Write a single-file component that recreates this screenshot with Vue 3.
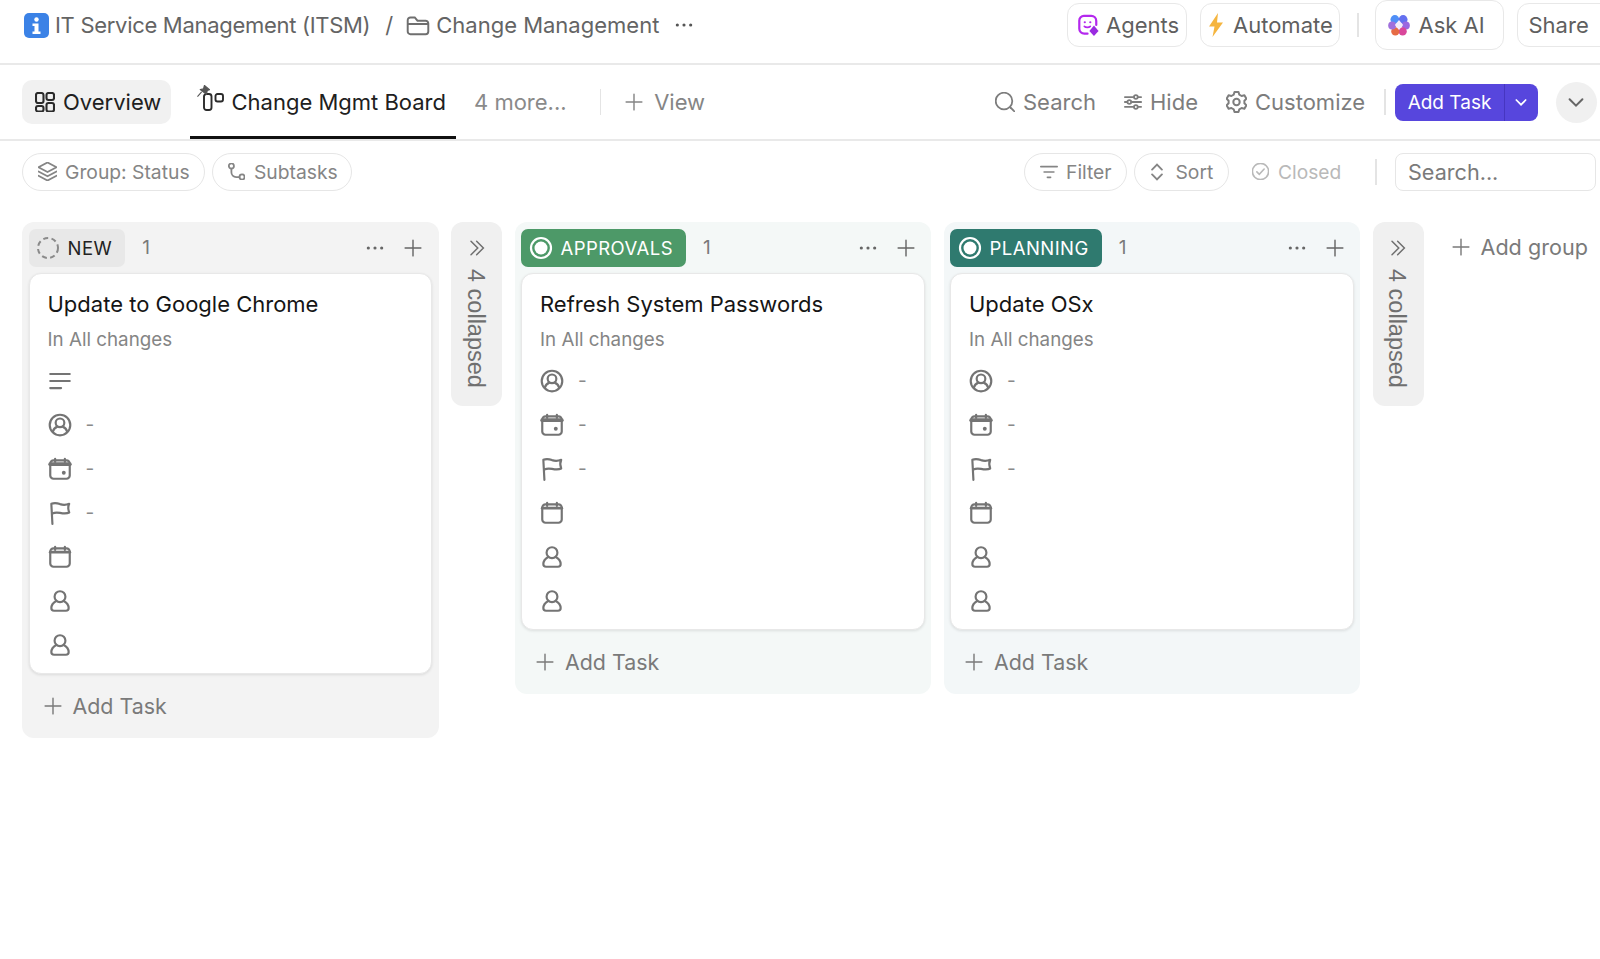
<script setup>
const columns = [
  {
    id: 'new', label: 'NEW', tone: 'tone-new', status: 'dashed', title: 'Update to Google Chrome',
    rows: [
      { icon: 'lines' }, { icon: 'usercircle', dash: true }, { icon: 'caldue', dash: true }, { icon: 'flag', dash: true },
      { icon: 'cal' }, { icon: 'user' }, { icon: 'user' }
    ]
  },
  {
    id: 'approvals', label: 'APPROVALS', tone: 'tone-approvals', status: 'ring', title: 'Refresh System Passwords',
    rows: [
      { icon: 'usercircle', dash: true }, { icon: 'caldue', dash: true }, { icon: 'flag', dash: true },
      { icon: 'cal' }, { icon: 'user' }, { icon: 'user' }
    ]
  },
  {
    id: 'planning', label: 'PLANNING', tone: 'tone-planning', status: 'ring', title: 'Update OSx',
    rows: [
      { icon: 'usercircle', dash: true }, { icon: 'caldue', dash: true }, { icon: 'flag', dash: true },
      { icon: 'cal' }, { icon: 'user' }, { icon: 'user' }
    ]
  }
]
</script>

<template>
  <svg class="defs" xmlns="http://www.w3.org/2000/svg">
    <symbol id="i-plus" viewBox="0 0 24 24"><path d="M12 1.500v21M1.500 12h21" /></symbol>
    <symbol id="i-dots" viewBox="0 0 24 24"><circle cx="4" cy="12" r="1.900" class="solid" /><circle cx="12" cy="12" r="1.900" class="solid" /><circle cx="20" cy="12" r="1.900" class="solid" /></symbol>
    <symbol id="i-folder" viewBox="0 0 24 24"><path d="M2.500 7.500A2.500 2.500 0 0 1 5 5h4l2.500 3H19a2.500 2.500 0 0 1 2.500 2.500V18a2.500 2.500 0 0 1-2.500 2.500H5A2.500 2.500 0 0 1 2.500 18zM2.500 11h19" /></symbol>
    <symbol id="i-overview" viewBox="2 2 20 20.500"><rect x="3" y="3" width="7.500" height="10" rx="2" /><rect x="13.500" y="3" width="7.500" height="7" rx="2" /><rect x="3" y="16" width="7.500" height="5.500" rx="2" /><rect x="13.500" y="13" width="7.500" height="8.500" rx="2" /></symbol>
    <symbol id="i-board" viewBox="0 0 21 18"><rect x="1" y="1" width="7.500" height="16" rx="2.500" /><rect x="12.500" y="1" width="7.500" height="7.500" rx="2" /></symbol>
    <symbol id="i-search" viewBox="2 2 20 20"><circle cx="11" cy="11" r="8.300" /><path d="M17.500 17.500l4 4" /></symbol>
    <symbol id="i-sliders" viewBox="1 1 22 22"><path d="M2 6h11M18 6h4M2 12h3M10 12h12M2 18h11M18 18h4" /><circle cx="15.500" cy="6" r="2.300" /><circle cx="7.500" cy="12" r="2.300" /><circle cx="15.500" cy="18" r="2.300" /></symbol>
    <symbol id="i-gear" viewBox="1.500 2 21 22"><path d="M10 3h4l.8 2.700 2.300 1.300 2.800-.7 2 3.500-2 2v2.400l2 2-2 3.500-2.800-.7-2.300 1.300-.8 2.700h-4l-.8-2.700-2.300-1.300-2.800.7-2-3.500 2-2v-2.400l-2-2 2-3.500 2.800.7 2.300-1.300z" stroke-linejoin="round" /><circle cx="12" cy="13" r="3.200" /></symbol>
    <symbol id="i-chevron" viewBox="0 0 24 24"><path d="M5 9l7 7 7-7" /></symbol>
    <symbol id="i-layers" viewBox="2 2 20 20"><path d="M12 2.500l9.500 5-9.500 5-9.500-5zM2.500 12l9.500 5 9.500-5M2.500 16.500l9.500 5 9.500-5" stroke-linejoin="round" /></symbol>
    <symbol id="i-subtasks" viewBox="2 2 20 20"><circle cx="6" cy="5.500" r="3" /><circle cx="18.500" cy="18.500" r="3" /><path d="M6 8.500V13a5.500 5.500 0 0 0 5.500 5.500h4" /></symbol>
    <symbol id="i-filter" viewBox="1 1 22 22"><path d="M2 5.500h20M6 12h12M10 18.500h4" /></symbol>
    <symbol id="i-sort" viewBox="5 1 14 22"><path d="M6 9l6-6 6 6M6 15l6 6 6-6" /></symbol>
    <symbol id="i-check" viewBox="1.500 1.500 21 21"><circle cx="12" cy="12" r="10" /><path d="M7.500 12.500l3 3 6-6.500" /></symbol>
    <symbol id="i-double" viewBox="0 0 24 24"><path d="M4 3l9 9-9 9M11.500 3l9 9-9 9" /></symbol>
    <symbol id="i-lines" viewBox="0 0 24 24"><path d="M3 5.500h18M3 12h18M3 18.500h10" /></symbol>
    <symbol id="i-usercircle" viewBox="0 0 24 24"><circle cx="12" cy="12" r="9.500" /><circle cx="12" cy="10" r="4" /><path d="M9.500 13.500c-2 .8-3.500 2.300-4 4.500M14.500 13.500c2 .8 3.500 2.300 4 4.500" /></symbol>
    <symbol id="i-caldue" viewBox="0 0 24 24"><rect x="3" y="4" width="18" height="17" rx="3" /><path d="M3 7.500h18" stroke-width="3.600" /><path d="M7.500 2.500v3M16.500 2.500v3" /><circle cx="15.500" cy="15.500" r="1.800" class="solid" /></symbol>
    <symbol id="i-cal" viewBox="0 0 24 24"><rect x="3" y="4" width="18" height="17" rx="3" /><path d="M3 7.500h18" stroke-width="2.600" /><path d="M7.500 2.500v3M16.500 2.500v3" /></symbol>
    <symbol id="i-flag" viewBox="0 0 24 24"><path d="M5 22L4 3.500C7.500 2 10 3 12 3.800c3 1 6 .7 8.500-.3-1.400 3-1.400 4.500 0 8-2.500 1.500-5.500 1-8.500.4-2.800-.5-5-.5-7 .6" stroke-linejoin="round" /></symbol>
    <symbol id="i-user" viewBox="0 0 24 24"><circle cx="12" cy="8" r="5" /><path d="M8.500 12c-2.500 1.500-4.500 3.500-4.500 6.500C4 20 5 21 6.500 21h11c1.500 0 2.500-1 2.500-2.500 0-3-2-5-4.500-6.500" /></symbol>
  </svg>

  <div class="page">
    <header class="topbar">
      <svg class="logo" viewBox="0 0 25 25">
        <rect width="25" height="25" rx="5" fill="#3b82e6" />
        <circle cx="12.500" cy="6.500" r="2.200" fill="#fff" />
        <path d="M8.500 10.500h6v8h2v2.500h-8v-2.500h2v-5.500h-2z" fill="#fff" />
      </svg>
      <span class="crumb crumb-space">IT Service Management (ITSM)</span>
      <span class="slash">/</span>
      <svg class="ic folder"><use href="#i-folder" /></svg>
      <span class="crumb">Change Management</span>
      <svg class="ic topdots"><use href="#i-dots" /></svg>

      <div class="top-actions">
        <button class="top-btn agents">
          <svg class="brand" viewBox="0 0 24 24">
            <path d="M11.500 21.500H8A5.500 5.500 0 0 1 2.500 16V7A5 5 0 0 1 7.500 2h8A5.500 5.500 0 0 1 21 7.500V12" fill="none" stroke="#b428ee" stroke-width="2.400" stroke-linecap="round" />
            <circle cx="8.500" cy="9" r="1.200" fill="#b428ee" />
            <circle cx="14.500" cy="9" r="1.200" fill="#b428ee" />
            <path d="M8 13.500c1.500 1.500 5 1.500 6.500 0" fill="none" stroke="#b428ee" stroke-width="1.800" stroke-linecap="round" />
            <path d="M18.500 12.500l5 6-5 5.500-5-5.500z" fill="#9a2be0" />
          </svg>
          Agents
        </button>
        <button class="top-btn automate">
          <svg class="bolt" viewBox="0 0 16 24"><path d="M10 0L1 13.500h5.500L4.500 24 15 9.500H9z" fill="#f5b53f" /></svg>
          Automate
        </button>
        <span class="vline top-line"></span>
        <button class="top-btn askai">
          <svg class="brand flower" viewBox="0 0 24 24">
            <circle cx="7.500" cy="6" r="4.800" fill="#4f8ff7" />
            <circle cx="16.500" cy="6" r="4.800" fill="#6470f0" />
            <circle cx="19.500" cy="12.500" r="4.300" fill="#9a68e0" />
            <circle cx="16" cy="19" r="4.500" fill="#d9479b" />
            <circle cx="8" cy="19" r="4.500" fill="#e66b45" />
            <circle cx="4.500" cy="12.500" r="4.300" fill="#a070dc" />
            <path d="M12 6.500l4.500 5.500-4.500 5.500L7.500 12z" fill="#f3ecfb" />
          </svg>
          Ask AI
        </button>
        <button class="top-btn share">Share</button>
      </div>
    </header>

    <nav class="tabbar">
      <div class="tab tab-overview">
        <svg class="ic overview-ic dark"><use href="#i-overview" /></svg>
        Overview
      </div>
      <div class="tab tab-active">
        <svg class="pin" viewBox="0 0 14 14"><path d="M8 .5l5.500 4.500-2.500 1-.8 4L3.500 5 7 4.200zM5 7.500L.5 12.500" fill="#555" stroke="#555" stroke-width="1.200" stroke-linejoin="round" /></svg>
        <svg class="ic board-ic dark"><use href="#i-board" /></svg>
        Change Mgmt Board
      </div>
      <span class="more">4 more...</span>
      <span class="vline tab-line"></span>
      <div class="view-btn">
        <svg class="ic plus-ic"><use href="#i-plus" /></svg>
        View
      </div>

      <div class="tab-actions">
        <span class="tool"><svg class="ic search-ic"><use href="#i-search" /></svg>Search</span>
        <span class="tool"><svg class="ic sliders-ic"><use href="#i-sliders" /></svg>Hide</span>
        <span class="tool"><svg class="ic gear-ic"><use href="#i-gear" /></svg>Customize</span>
        <span class="vline tool-line"></span>
        <div class="add-task">
          <span class="add-main">Add Task</span>
          <span class="add-caret"><svg class="ic caret-ic"><use href="#i-chevron" /></svg></span>
        </div>
        <span class="round-btn"><svg class="ic round-ic"><use href="#i-chevron" /></svg></span>
      </div>
    </nav>

    <section class="filters">
      <span class="chip chip-group"><svg class="ic layers-ic"><use href="#i-layers" /></svg>Group: Status</span>
      <span class="chip chip-sub"><svg class="ic sub-ic"><use href="#i-subtasks" /></svg>Subtasks</span>
      <div class="filters-right">
        <span class="chip chip-filter"><svg class="ic filter-ic"><use href="#i-filter" /></svg>Filter</span>
        <span class="chip chip-sort"><svg class="ic sort-ic"><use href="#i-sort" /></svg>Sort</span>
        <span class="closed"><svg class="ic check-ic"><use href="#i-check" /></svg>Closed</span>
        <span class="vline filter-line"></span>
        <div class="search-box">Search...</div>
      </div>
    </section>

    <main class="board">
      <template v-for="col in columns" :key="col.id">
        <div class="column" :class="col.tone">
          <div class="col-head">
            <span class="status">
              <svg class="status-ic" viewBox="0 0 24 24">
                <circle v-if="col.status === 'dashed'" cx="12" cy="12" r="10" fill="none" stroke="#8a8a8a" stroke-width="2" stroke-dasharray="5 3.400" />
                <template v-else>
                  <circle cx="12" cy="12" r="10" fill="none" stroke="#fff" stroke-width="2.200" />
                  <circle cx="12" cy="12" r="6.500" fill="#fff" />
                </template>
              </svg>
              {{ col.label }}
            </span>
            <span class="count">1</span>
            <svg class="ic head-dots"><use href="#i-dots" /></svg>
            <svg class="ic head-plus"><use href="#i-plus" /></svg>
          </div>
          <article class="card">
            <h3 class="card-title">{{ col.title }}</h3>
            <p class="card-sub">In All changes</p>
            <div v-for="(row, i) in col.rows" :key="i" class="card-row">
              <svg class="ic row-ic"><use :href="'#i-' + row.icon" /></svg>
              <span v-if="row.dash" class="dash">-</span>
            </div>
          </article>
          <div class="add-row">
            <svg class="ic plus-ic"><use href="#i-plus" /></svg>
            Add Task
          </div>
        </div>
        <div v-if="col.id !== 'approvals'" class="collapsed">
          <svg class="ic double-ic"><use href="#i-double" /></svg>
          <span class="collapsed-text">4 collapsed</span>
        </div>
      </template>
      <div class="add-group">
        <svg class="ic plus-ic"><use href="#i-plus" /></svg>
        Add group
      </div>
    </main>
  </div>
</template>

<style scoped>
.defs {
  display: none;
}

.page {
  width: 1600px;
  height: 959px;
  overflow: hidden;
  background: #fff;
  font-family: Inter, "Liberation Sans", sans-serif;
  color: #6f6f6f;
}

.ic {
  fill: none;
  stroke: currentColor;
  stroke-width: 1.800;
  stroke-linecap: round;
  flex: none;
}

.topbar {
  display: flex;
  align-items: center;
  height: 65px;
  box-sizing: border-box;
  padding: 0 12px 13px 24px;
  border-bottom: 2px solid #e9e9e9;
}

.logo {
  width: 25px;
  height: 25px;
  margin-right: 6px;
  flex: none;
}

.crumb {
  font-size: 22px;
  color: #646464;
  white-space: nowrap;
}

.crumb-space {
  letter-spacing: -0.3px;
}

.slash {
  font-size: 22px;
  margin: 0 12px 0 15px;
  color: #646464;
}

.folder {
  width: 26px;
  height: 26px;
  margin-right: 5px;
}

.topdots {
  width: 20px;
  height: 20px;
  margin-left: 15px;
  color: #555;
}

.top-actions {
  margin-left: auto;
  display: flex;
  align-items: center;
  width: 533px;
  flex: none;
  margin-right: -12px;
}

.top-btn {
  display: flex;
  align-items: center;
  flex: none;
  height: 44px;
  box-sizing: border-box;
  border: 1.500px solid #e8e8e8;
  border-radius: 12px;
  background: #fff;
  font: inherit;
  font-size: 22px;
  color: #5f5f5f;
  white-space: nowrap;
  padding: 0;
}

.brand {
  width: 22px;
  height: 22px;
  flex: none;
}

.agents {
  width: 120px;
  padding-left: 9px;
  gap: 7px;
}

.automate {
  width: 140px;
  margin-left: 13px;
  padding-left: 7px;
  gap: 9px;
}

.bolt {
  width: 16px;
  height: 24px;
  flex: none;
}

.top-line {
  height: 24px;
  margin: 0 16px 0 17px;
}

.askai {
  width: 129px;
  height: 50px;
  padding-left: 12px;
  gap: 9px;
}

.share {
  width: 100px;
  margin-left: 13px;
  padding-left: 11px;
}

.vline {
  width: 1.500px;
  background: #e4e4e4;
  flex: none;
  display: block;
}

.tabbar {
  display: flex;
  align-items: center;
  height: 76px;
  box-sizing: border-box;
  padding-left: 22px;
  border-bottom: 2px solid #e9e9e9;
}

.tab {
  display: flex;
  align-items: center;
  font-size: 22px;
  color: #202020;
  white-space: nowrap;
}

.overview-ic {
  width: 20px;
  height: 20.500px;
  stroke-width: 2.100;
}

.board-ic {
  width: 21px;
  height: 18px;
  stroke-width: 1.900;
}

.dark {
  color: #2b2b2b;
}

.tab-overview {
  width: 149px;
  height: 44px;
  box-sizing: border-box;
  padding-left: 13px;
  gap: 8px;
  background: #f1f1f1;
  border-radius: 10px;
}

.tab-active {
  position: relative;
  margin-left: 19px;
  width: 266px;
  height: 74px;
  box-sizing: border-box;
  padding-left: 12.500px;
  gap: 8px;
  border-bottom: 3px solid #111;
  padding-top: 3px;
}

.pin {
  position: absolute;
  left: 6.500px;
  top: 20px;
  width: 13px;
  height: 13px;
}

.more {
  margin-left: 18px;
  font-size: 22px;
  color: #8a8a8a;
}

.tab-line {
  height: 26px;
  margin: 0 24px 0 33px;
}

.view-btn {
  display: flex;
  align-items: center;
  gap: 11px;
  font-size: 22px;
  color: #858585;
}

.plus-ic {
  width: 18px;
  height: 18px;
  stroke-width: 1.900;
}

.tab-actions {
  margin-left: auto;
  display: flex;
  align-items: center;
  width: 605px;
  flex: none;
}

.tool {
  display: flex;
  align-items: center;
  font-size: 22px;
  color: #7d7d7d;
  gap: 8px;
  margin-right: 28px;
  white-space: nowrap;
}

.search-ic {
  width: 20px;
  height: 20px;
}

.sliders-ic {
  width: 18px;
  height: 18px;
  stroke-width: 2.200;
}

.gear-ic {
  width: 21px;
  height: 22px;
  stroke-width: 2;
}

.tool-line {
  height: 26px;
  margin: 0 9px 0 -9px;
}

.add-task {
  display: flex;
  width: 143px;
  height: 37px;
  background: #5746dd;
  border-radius: 8px;
  color: #fff;
  font-size: 19px;
  flex: none;
}

.add-main {
  width: 110px;
  display: flex;
  align-items: center;
  padding-left: 13px;
  box-sizing: border-box;
  border-right: 1px solid #4636c0;
  white-space: nowrap;
}

.add-caret {
  flex: 1;
  display: flex;
  align-items: center;
  justify-content: center;
}

.caret-ic {
  width: 16px;
  height: 16px;
  stroke-width: 2.600;
}

.round-btn {
  width: 41px;
  height: 41px;
  border-radius: 50%;
  background: #f0f0f0;
  margin-left: 18px;
  display: flex;
  align-items: center;
  justify-content: center;
  flex: none;
  color: #666;
}

.round-ic {
  width: 22px;
  height: 22px;
  stroke-width: 2.200;
}

.filters {
  display: flex;
  align-items: center;
  height: 37.500px;
  margin-top: 12px;
  padding-left: 22px;
}

.chip {
  display: flex;
  align-items: center;
  height: 37.500px;
  box-sizing: border-box;
  border: 1.500px solid #e6e6e6;
  border-radius: 19px;
  font-size: 19.300px;
  color: #858585;
  white-space: nowrap;
}

.layers-ic {
  width: 19px;
  height: 19px;
  stroke-width: 1.900;
}

.sub-ic {
  width: 17px;
  height: 17px;
  stroke-width: 2.100;
}

.filter-ic {
  width: 18px;
  height: 18px;
  stroke-width: 2;
}

.check-ic {
  width: 17px;
  height: 17px;
  stroke-width: 2;
}

.chip-group {
  width: 183px;
  padding-left: 14.500px;
  gap: 8.500px;
}

.chip-sub {
  width: 139.500px;
  margin-left: 7px;
  padding-left: 15px;
  gap: 9px;
}

.filters-right {
  margin-left: auto;
  display: flex;
  align-items: center;
  width: 576px;
  flex: none;
}

.chip-filter {
  width: 103px;
  padding-left: 15px;
  gap: 8px;
}

.chip-sort {
  width: 95px;
  margin-left: 7px;
  padding-left: 15.500px;
  gap: 13px;
}

.sort-ic {
  width: 12px;
  height: 18px;
  stroke-width: 2.300;
}

.closed {
  display: flex;
  align-items: center;
  gap: 9px;
  font-size: 19.200px;
  color: #b9b9b9;
  margin-left: 23px;
  width: 110px;
}

.filter-line {
  height: 26px;
  margin: 0 18.500px 0 13px;
}

.search-box {
  width: 201px;
  height: 37.500px;
  box-sizing: border-box;
  border: 1.500px solid #e6e6e6;
  border-radius: 8px;
  padding-left: 12px;
  display: flex;
  align-items: center;
  font-size: 21.600px;
  color: #7a7a7a;
}

.board {
  display: flex;
  align-items: flex-start;
  gap: 12.500px;
  padding: 31px 0 0 22px;
}

.column {
  width: 416.500px;
  box-sizing: border-box;
  border-radius: 12px;
  padding: 7px 6.500px 0;
  flex: none;
}

.tone-new {
  background: #f3f3f3;
}

.tone-approvals {
  background: #f4f8f7;
}

.tone-planning {
  background: #f3f7f8;
}

.col-head {
  display: flex;
  align-items: center;
  height: 38px;
  margin-bottom: 6px;
}

.status {
  display: flex;
  align-items: center;
  height: 38px;
  box-sizing: border-box;
  padding: 0 13px 0 7.500px;
  gap: 8px;
  border-radius: 7px;
  font-size: 18.500px;
  font-weight: 400;
  letter-spacing: 0.45px;
  white-space: nowrap;
}

.status-ic {
  width: 24px;
  height: 24px;
  flex: none;
}

.tone-new .status {
  background: #e8e8e8;
  color: #222;
  padding: 0 13px 0 7px;
}

.tone-approvals .status {
  background: #4d9968;
  color: #fff;
}

.tone-planning .status {
  background: #2f7a6f;
  color: #fff;
}

.count {
  margin-left: 17px;
  font-size: 19px;
  color: #7a7a7a;
}

.head-dots {
  margin-left: auto;
  width: 20px;
  height: 20px;
  color: #666;
}

.head-plus {
  margin-left: 19px;
  margin-right: 10px;
  width: 18px;
  height: 18px;
  stroke-width: 1.900;
  color: #666;
}

.card {
  background: #fff;
  border: 1px solid #e8e8e8;
  border-radius: 12px;
  box-shadow: 0 1px 3px rgba(0, 0, 0, 0.1);
  box-sizing: border-box;
  padding: 17px 17px 6px 18px;
}

.card-title {
  margin: 0;
  font-size: 22px;
  font-weight: 400;
  line-height: 26px;
  color: #151515;
}

.card-sub {
  margin: 11px 0 7px;
  font-size: 18.800px;
  line-height: 24px;
  color: #858585;
}

.card-row {
  display: flex;
  align-items: center;
  height: 44px;
  gap: 13px;
}

.row-ic {
  width: 26px;
  height: 26px;
  margin-left: -1px;
  stroke-width: 2;
  color: #747474;
}

.dash {
  font-size: 19px;
  color: #8a8a8a;
}

.add-row {
  display: flex;
  align-items: center;
  gap: 11px;
  height: 36px;
  margin-top: 14px;
  margin-bottom: 14px;
  padding-left: 15px;
  font-size: 21.400px;
  color: #7a7a7a;
}

.collapsed {
  width: 51px;
  height: 184px;
  border-radius: 12px;
  background: #f0f0f0;
  flex: none;
  display: flex;
  flex-direction: column;
  align-items: center;
  padding-top: 17px;
  box-sizing: border-box;
  color: #6f6f6f;
}

.double-ic {
  width: 18px;
  height: 18px;
  stroke-width: 2;
}

.collapsed-text {
  margin-top: 12px;
  margin-left: -2px;
  writing-mode: vertical-rl;
  font-family: "Liberation Sans", Arial, sans-serif;
  font-size: 23.500px;
  line-height: 24px;
  white-space: nowrap;
  color: #6f6f6f;
}

.add-group {
  display: flex;
  align-items: center;
  gap: 11px;
  height: 38px;
  margin: 6px 0 0 15.500px;
  font-size: 21.600px;
  color: #7a7a7a;
  white-space: nowrap;
}
</style>

<style>
html,
body {
  margin: 0;
  background: #fff;
}

.solid {
  fill: currentColor;
  stroke: none;
}
</style>
